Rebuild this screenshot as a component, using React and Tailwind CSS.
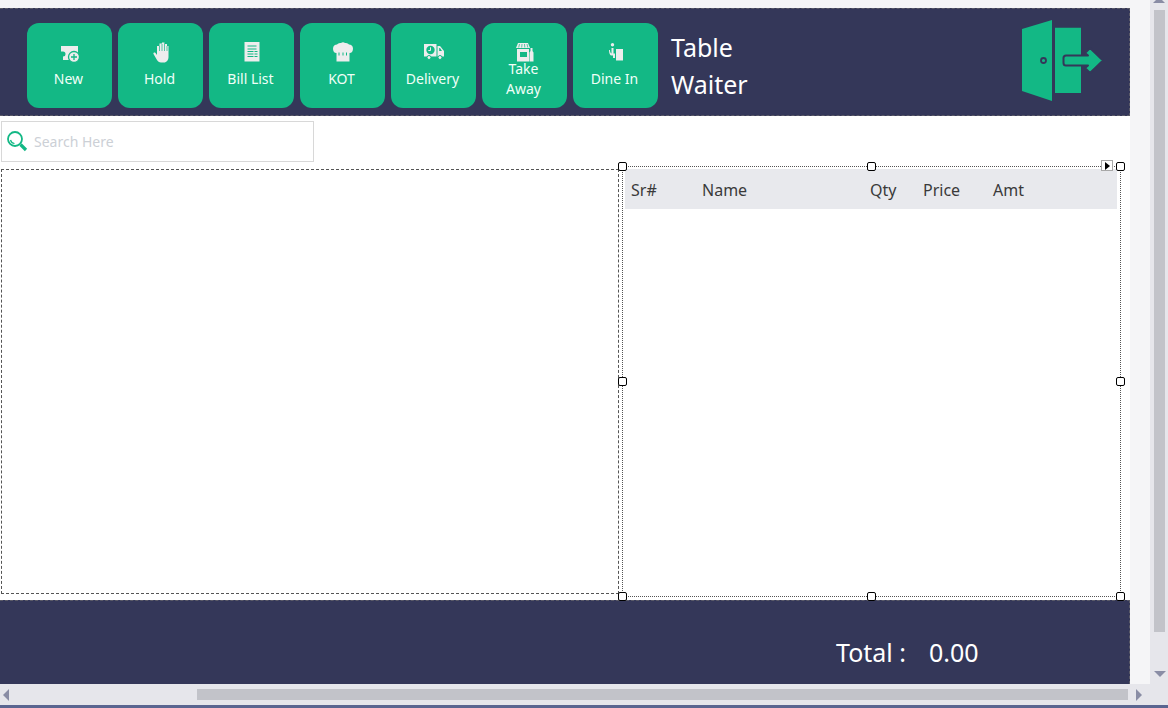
const G = "#13b885";
const DARK = "#343759";
const W = "#ededed";

const New = () => (
  <svg width="20" height="21" viewBox="0 0 20 21">
    <path d="M1 4h17v14H3v-3.500a2.500 2.500 0 0 0 0-5H1z" fill={W} />
    <circle cx="14" cy="15" r="5.500" fill={W} stroke={G} strokeWidth="1.300" />
    <path d="M14 12v6M11 15h6" stroke={G} strokeWidth="1.300" />
  </svg>
);
const Hold = () => (
  <svg width="16" height="21" viewBox="0 0 16 21">
    <path d="M4 13V4h2.500V1.500H9V.5h2.500V2H14v2h1.500V15c0 3-2 5.500-4.500 5.500H8c-2 0-3-1-4-2.500L.5 12c-.6-1 .8-2.200 1.800-1.300z" fill={W} />
    <path d="M6.500 4v5M9 2v7M11.500 1.500V9M14 4v5" stroke={G} strokeWidth=".7" />
  </svg>
);
const Bill = () => (
  <svg width="16" height="20" viewBox="0 0 16 20">
    <path d="M.5 0h15v19.500H.5z" fill={W} />
    <path d="M3.500 4h9M3.500 7h9M3.500 9.500h6M10.500 9.500h3M3.500 12h6M10.500 12h3M3.500 14.500h6M10.500 14.500h3" stroke={G} strokeWidth="1" />
  </svg>
);
const Kot = () => (
  <svg width="20" height="20" viewBox="0 0 20 20">
    <path d="M3.500 11C1 11 0 9 0 6.500S2 2.500 4 2.500C5 1 7 1 8 1c1-1 3-1 4 0 1 0 3 0 4 1.500 2 0 4 1.500 4 4S19 11 16.500 11z" fill={W} />
    <path d="M3.500 8h13v11.500h-13z" fill={W} />
    <path d="M6 10.500v3M10 10.500v3M13.500 10.500v3" stroke={G} strokeWidth="1" />
  </svg>
);
const Delivery = () => (
  <svg width="20" height="16" viewBox="0 0 20 16">
    <path d="M0 0h12.500v12.500H0z" fill={W} />
    <circle cx="6.500" cy="6" r="4.200" fill={G} />
    <path d="M6.500 3.300v3.200H4.300" stroke={W} strokeWidth="1" fill="none" />
    <path d="M13.500 2H16l4 5v5.500h-6.500z" fill={W} />
    <path d="M15.200 4h.8l2 3h-2.800z" fill={G} />
    <circle cx="5" cy="13.500" r="2" fill={W} stroke={G} />
    <circle cx="16" cy="13.500" r="2" fill={W} stroke={G} />
  </svg>
);
const Take = () => (
  <svg width="18" height="19" viewBox="0 0 18 19">
    <path d="M2 0h10l2 5H0z" fill={W} />
    <path d="M3.500 1l-.8 3.500M6 1l-.3 3.500M8.500 1l.3 3.500M11 1l.8 3.500" stroke={G} strokeWidth=".7" />
    <path d="M1 6h12v12.500H1z" fill={W} />
    <path d="M4 9h7v5H4z" fill={G} />
    <path d="M14.500 5h2v3l1 1.500v9h-4V9.500l1-1.500z" fill={W} />
  </svg>
);
const Dine = () => (
  <svg width="16" height="18" viewBox="0 0 16 18">
    <circle cx="4.500" cy="1.800" r="1.700" fill={W} />
    <path d="M3.500 5h2v5.500h1.500V15H5v-2.500H3.500C2 12.500 1 10.500 1 7h1c0 2 .5 3 1.500 3.500z" fill={W} />
    <path d="M8 6h7v11.500H8z" fill={W} />
  </svg>
);

const buttons = [
  { icon: <New />, label: "New" },
  { icon: <Hold />, label: "Hold" },
  { icon: <Bill />, label: "Bill List" },
  { icon: <Kot />, label: "KOT" },
  { icon: <Delivery />, label: "Delivery" },
  { icon: <Take />, label: ["Take", "Away"] },
  { icon: <Dine />, label: "Dine In" },
];

function Handle({ className }) {
  return <div className={"absolute w-[9px] h-[9px] bg-white border border-black rounded-[2px] " + className} />;
}

function ToolButton({ icon, label }) {
  const two = Array.isArray(label);
  return (
    <div className="w-[85px] h-[85px] rounded-[12px] bg-[#13b885] flex flex-col items-center text-[#f0fff8] text-[14px] leading-[20px]">
      <div className="h-[21px] mt-[19px] flex items-center justify-center">{icon}</div>
      {two ? (
        <div className="flex flex-col items-center -mt-[4px] pr-[2px]">
          <span>{label[0]}</span>
          <span>{label[1]}</span>
        </div>
      ) : (
        <span className="mt-[6px] pr-[2px]">{label}</span>
      )}
    </div>
  );
}

export default function App() {
  return (
    <div className="w-[1168px] h-[708px] overflow-hidden flex flex-col bg-[#f5f5f7] font-['Noto_Sans',sans-serif]">
      <div className="flex h-[684px]">
        <div className="w-[1130px] flex flex-col pt-[8px]">
          <header className="h-[108px] bg-[#343759] border-y border-r border-dashed border-[#5b5b68] flex items-center pl-[27px]">
            <div className="flex gap-[6px] mt-[6px]">
              {buttons.map((b, i) => (
                <ToolButton key={i} icon={b.icon} label={b.label} />
              ))}
            </div>
            <div className="ml-[13px] mt-[8px] text-white text-[25px] leading-[37px] w-[348px]">
              <div>Table</div>
              <div>Waiter</div>
            </div>
            <svg width="86" height="84" viewBox="0 0 86 84" className="-mt-[2px] ml-0 shrink-0">
              <path d="M3 10 33 1V82L3 72z" fill={G} />
              <circle cx="24.500" cy="41.500" r="2.500" fill="none" stroke={DARK} strokeWidth="1.800" />
              <path d="M36 8.700h26V74H36z" fill={G} />
              <path
                d="M47 36.500H69L66 34l5-5 13 12.500L71 54l-5-5 3-2.500H47a2.500 2.500 0 0 1-2.500-2.500V39a2.500 2.500 0 0 1 2.500-2.500z"
                fill={G}
                stroke={DARK}
                strokeWidth="2"
                strokeLinejoin="round"
              />
            </svg>
          </header>

          <main className="flex-1 bg-white flex flex-col relative">
            <div className="pl-[1px] pt-[5px] h-[53px]">
              <div className="w-[313px] h-[41px] border border-[#d8d8d8] flex items-center pl-[5px] gap-[6px]">
                <svg width="21" height="21" viewBox="0 0 21 21" className="shrink-0">
                  <circle cx="8" cy="8" r="7" fill="none" stroke={G} strokeWidth="1.800" />
                  <path d="M3.500 9c.5 2 2 3.200 4 3.500" fill="none" stroke={G} strokeWidth="1.200" />
                  <path d="M13.500 13.500l5.500 5.500" stroke={G} strokeWidth="3.200" />
                </svg>
                <input
                  readOnly
                  placeholder="Search Here"
                  className="bg-transparent outline-none text-[14px] w-[200px] placeholder:text-[#ccd0d6]"
                />
              </div>
            </div>
            <div className="flex items-start pl-[1px] h-[431px]">
              <div className="w-[618px] h-[425px] border border-dashed border-[#555]" />
              <div className="ml-[3px] -mt-[3px] w-[499px] h-[431px] border border-dotted border-[#555] pt-[2px] pl-[2px] relative">
                <div className="h-[40px] w-[492px] pt-[2px] bg-[#e8e9ed] grid grid-cols-[71px_168px_53px_70px_auto] items-center text-[16px] text-[#3a3a3a] pl-[6px]">
                  <span>Sr#</span>
                  <span>Name</span>
                  <span>Qty</span>
                  <span>Price</span>
                  <span>Amt</span>
                </div>
                <Handle className="left-[-5px] top-[-5px]" />
                <Handle className="left-[244px] top-[-5px]" />
                <Handle className="right-[-5px] top-[-5px]" />
                <Handle className="left-[-5px] top-[210px]" />
                <Handle className="right-[-5px] top-[210px]" />
                <Handle className="left-[-5px] bottom-[-5px]" />
                <Handle className="left-[244px] bottom-[-5px]" />
                <Handle className="right-[-5px] bottom-[-5px]" />
                <div className="absolute right-[7px] top-[-7px] w-[12px] h-[11px] bg-white border border-[#a8a8a8] flex items-center justify-center">
                  <div className="w-0 h-0 border-y-[4px] border-y-transparent border-l-[5px] border-l-black" />
                </div>
              </div>
            </div>
          </main>

          <footer className="h-[84px] bg-[#343759] border-t border-r border-dashed border-[#5b5b68] flex items-start text-white text-[25px] leading-[34px] pt-[34px] pl-[836px]">
            <span className="w-[93px]">Total :</span>
            <span>0.00</span>
          </footer>
        </div>
        <div className="w-[20px]" />
        <div className="w-[18px] bg-[#e6e6eb] flex flex-col overflow-hidden">
          <div className="h-[10px] pl-[3px]">
            <div className="w-0 h-0 -mt-[3px] border-x-[6px] border-x-transparent border-b-[6px] border-b-[#8a8da5]" />
          </div>
          <div className="w-[11px] h-[622px] bg-[#c2c3c9] ml-[4px]" />
          <div className="h-[39px] pl-[4px] pt-[39px]">
            <div className="w-0 h-0 border-x-[6px] border-x-transparent border-t-[6px] border-t-[#8a8da5]" />
          </div>
        </div>
      </div>
      <div className="h-[21px] bg-[#e6e6eb] flex items-center pl-[3px]">
        <div className="w-0 h-0 border-y-[6px] border-y-transparent border-r-[6px] border-r-[#8a8da5]" />
        <div className="ml-[188px] w-[931px] h-[11px] bg-[#c2c3c9]" />
        <div className="ml-[8px] w-0 h-0 border-y-[6px] border-y-transparent border-l-[6px] border-l-[#8a8da5]" />
      </div>
      <div className="h-[3px] bg-[#5a6590]" />
    </div>
  );
}
